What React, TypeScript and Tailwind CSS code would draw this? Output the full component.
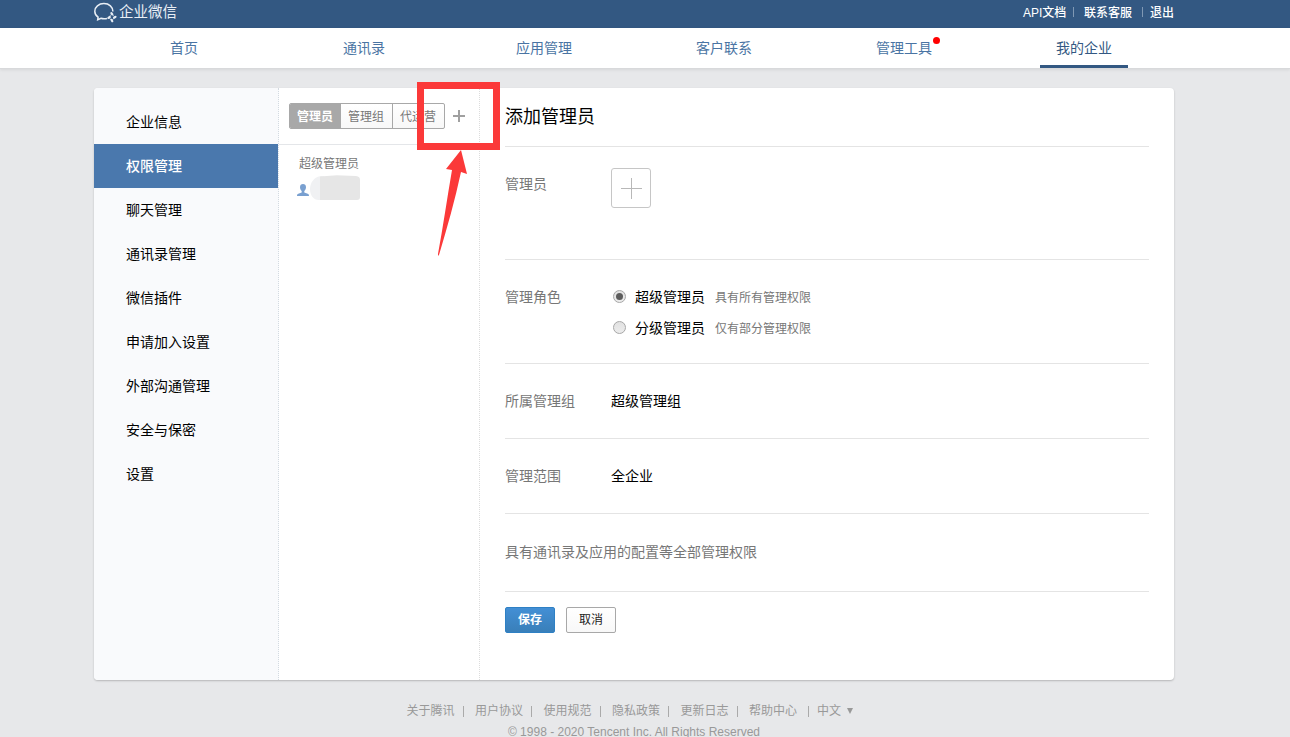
import React from "react";

const navItems = ["首页", "通讯录", "应用管理", "客户联系", "管理工具", "我的企业"];
const menuItems = [
  "企业信息",
  "权限管理",
  "聊天管理",
  "通讯录管理",
  "微信插件",
  "申请加入设置",
  "外部沟通管理",
  "安全与保密",
  "设置",
];
const footerLinks = ["关于腾讯", "用户协议", "使用规范", "隐私政策", "更新日志", "帮助中心"];

function Logo() {
  return (
    <div className="flex h-[24px] items-center text-white">
      <svg width="24" height="23" viewBox="0 0 24 23" fill="none" stroke="#e8eef5" strokeWidth="1.5" className="mt-[1px]">
        <path d="M18.900 10.500C18.900 6 15.200 2.600 9.900 2.600C4.700 2.600 0.800 6 0.800 10.200C0.800 12.700 2.100 14.800 4.100 16.200L3.700 18.800L7 17.300C8.900 17.900 11 17.900 13 17.400" />
        <path d="M17.400 12.200L18.300 13.400M21.500 15.900L20.100 16.700M18.300 20.200L17.500 18.800M14.400 16.900L15.800 16" strokeWidth="2.200" strokeLinecap="round" />
        <path d="M18 13L20.800 16M20.500 16.500L18.200 19.200M17.800 19.300L15 16.900M15.200 16L17.400 13.200" strokeWidth="0.600" />
      </svg>
      <span className="ml-[1px] mt-[-2px] text-[14.500px] leading-[22px] text-[#e9eff6]">企业微信</span>
    </div>
  );
}

function TopBar() {
  return (
    <header className="h-[28px] bg-[#335882] pl-[94px]">
      <div className="flex w-[1080px] items-start justify-between">
        <Logo />
        <div className="flex h-[24px] items-center text-[12px] font-medium text-white">
          <span className="w-[45px] whitespace-nowrap">
            <span className="font-['Liberation_Sans',sans-serif] font-normal">API</span>文档
          </span>
          <span className="ml-[5px] mr-[10px] h-[10px] w-px bg-[#7f98b4]" />
          <span>联系客服</span>
          <span className="ml-[10px] mr-[7px] h-[10px] w-px bg-[#7f98b4]" />
          <span>退出</span>
        </div>
      </div>
    </header>
  );
}

function Nav() {
  return (
    <nav className="h-[41px] border-b border-[#d8d9db] bg-white pl-[94px] shadow-[0_1px_3px_rgba(0,0,0,0.08)]">
      <ul className="flex w-[1080px]">
        {navItems.map((item, i) => (
          <li key={item} className="flex w-[180px] justify-center">
            <span
              className={
                i === 5
                  ? "h-[40px] w-[88px] border-b-[3px] border-[#335882] text-center text-[14px] leading-[39px] text-[#335882]"
                  : "relative h-[40px] text-[14px] leading-[39px] text-[#4a74a3]"
              }
            >
              {item}
              {i === 4 && <i className="absolute right-[-8px] top-[9px] size-[7px] rounded-full bg-[#ff0000]" />}
            </span>
          </li>
        ))}
      </ul>
    </nav>
  );
}

function SideMenu() {
  return (
    <ul className="w-[185px] rounded-l-[4px] border-r border-dotted border-[#d3dae1] bg-[#f9fafc] pt-[12px]">
      {menuItems.map((item, i) => (
        <li
          key={item}
          className={
            i === 1
              ? "h-[44px] bg-[#4a78ad] pl-[32px] text-[14px] font-medium leading-[43px] text-white"
              : "h-[44px] pl-[32px] text-[14px] leading-[43px] text-black"
          }
        >
          {item}
        </li>
      ))}
    </ul>
  );
}

function GroupColumn() {
  return (
    <section className="w-[201px] border-r border-dotted border-[#dcdcdc]">
      <div className="flex h-[57px] items-start border-b border-[#e4e6e9] pl-[10px] pt-[15px]">
        <div className="flex h-[26px] w-[156px] overflow-hidden rounded-[2px] border border-[#a8a8a8] bg-linear-to-b from-white to-[#f8f8f8] text-[12px] leading-[23px] text-[#777]">
          <span className="w-[51px] bg-[#a8a8a8] pl-[7px] font-bold text-white">管理员</span>
          <span className="w-[51px] pl-[7px]">管理组</span>
          <span className="w-[52px] border-l border-[#a8a8a8] pl-[7px]">代运营</span>
        </div>
        <svg width="12" height="12" className="ml-[8px] mt-[7px]" stroke="#a0a0a0" strokeWidth="2">
          <path d="M6 0V12M0 6H12" />
        </svg>
      </div>
      <div className="pl-[20px] pt-[9px]">
        <p className="text-[12px] leading-[18px] text-[#777]">超级管理员</p>
        <div className="ml-[-2px] mt-[3px] flex items-start">
          <svg width="12" height="12" viewBox="0 0 12 12" fill="#79a0d0" className="mt-[9px]">
            <path d="M6 0C4.200 0 3 1.200 3 3.200C3 4.700 3.600 6.100 4.700 7V8.400L1.300 9.800C.400 10.200 0 10.900 0 12H12C12 10.900 11.600 10.200 10.700 9.800L7.300 8.400V7C8.400 6.100 9 4.700 9 3.200C9 1.200 7.800 0 6 0Z" />
          </svg>
          <svg width="50" height="25" className="ml-[1px]">
            <path d="M10 1.200C4 2 0 8 0 14C0 20 3 25 9 25H14V1Z" fill="#f0f1f3" />
            <path d="M10 1.500L27 0.300L46 1C49 1.200 50 3 50 5V22Q50 25 47 25H10Z" fill="#e6e6e6" />
          </svg>
        </div>
      </div>
    </section>
  );
}

function Radio({ checked, label, hint }: { checked?: boolean; label: string; hint: string }) {
  return (
    <div className="flex h-[31px] items-center pl-[2px]">
      <span className="flex size-[13px] items-center justify-center rounded-full border border-[#a7a7a7] bg-linear-to-b from-[#e1e1e1] to-[#ececec]">
        {checked && <i className="size-[7px] rounded-full bg-[#5c5c5c]" />}
      </span>
      <span className="ml-[9px] text-[14px] text-black">{label}</span>
      <span className="ml-[10px] pt-[1px] text-[12px] text-[#777]">{hint}</span>
    </div>
  );
}

function Field({ label, className, children }: { label: string; className: string; children: React.ReactNode }) {
  return (
    <div className={className}>
      <span className="w-[106px] text-[14px] leading-[20px] text-[#777]">{label}</span>
      {children}
    </div>
  );
}

function AdminForm() {
  return (
    <main className="flex-1 px-[25px]">
      <h1 className="h-[59px] border-b border-[#e4e4e4] text-[18px] leading-[54px] text-black">添加管理员</h1>
      <Field label="管理员" className="flex h-[113px] items-start border-b border-[#e4e4e4] pt-[26px]">
        <button className="-mt-[5px] flex size-[40px] items-center justify-center rounded-[3px] border border-[#c6c6c6]">
          <svg width="22" height="22" stroke="#b8b8b8" strokeWidth="1">
            <path d="M11.500 1V22M1 11.500H22" />
          </svg>
        </button>
      </Field>
      <Field label="管理角色" className="flex h-[104px] items-start border-b border-[#e4e4e4] pt-[26px]">
        <div className="-mt-[5px]">
          <Radio checked label="超级管理员" hint="具有所有管理权限" />
          <Radio label="分级管理员" hint="仅有部分管理权限" />
        </div>
      </Field>
      <Field label="所属管理组" className="flex h-[75px] items-start border-b border-[#e4e4e4] pt-[26px]">
        <span className="text-[14px] leading-[20px] text-black">超级管理组</span>
      </Field>
      <Field label="管理范围" className="flex h-[75px] items-start border-b border-[#e4e4e4] pt-[26px]">
        <span className="text-[14px] leading-[20px] text-black">全企业</span>
      </Field>
      <p className="h-[78px] border-b border-[#e4e4e4] pt-[27px] text-[14px] leading-[20px] text-[#777]">
        具有通讯录及应用的配置等全部管理权限
      </p>
      <div className="flex gap-[11px] pt-[15px]">
        <button className="flex h-[26px] w-[50px] justify-center rounded-[2px] border border-[#2e80c4] bg-linear-to-b from-[#438fd5] to-[#397fb9] text-[12px] font-bold leading-[22px] text-white">
          保存
        </button>
        <button className="flex h-[26px] w-[50px] justify-center rounded-[2px] border border-[#a8a8a8] bg-linear-to-b from-white to-[#f8f8f8] text-[12px] leading-[22px] text-[#222]">
          取消
        </button>
      </div>
    </main>
  );
}

function Footer() {
  return (
    <footer className="ml-[94px] w-[1080px] pt-[21px] text-[12px] text-[#999]">
      <div className="flex h-[18px] items-center pl-[312.500px] leading-[18px]">
        {footerLinks.map((link, i) => (
          <React.Fragment key={link}>
            <span>{link}</span>
            <span className={i === 5 ? "ml-[11px] mr-[8px] mt-[2px] h-[11px] w-px bg-[#aaa]" : "ml-[8px] mr-[11.500px] mt-[2px] h-[11px] w-px bg-[#aaa]"} />
          </React.Fragment>
        ))}
        <span>中文</span>
        <svg width="6" height="6" viewBox="0 0 6 6" className="ml-[6px] mt-[1px]" fill="#999">
          <path d="M0 0H6L3 6Z" />
        </svg>
      </div>
      <p className="mt-[5px] text-center font-['Liberation_Sans',Arial,sans-serif] text-[12px] leading-[16px]">
        © 1998 - 2020 Tencent Inc. All Rights Reserved
      </p>
    </footer>
  );
}

export default function App() {
  return (
    <div className="relative h-[737px] w-[1290px] overflow-hidden bg-[#e7e8ea] font-['Noto_Sans_CJK_SC',sans-serif]">
      <TopBar />
      <Nav />
      <div className="ml-[94px] mt-[19px] flex h-[592px] w-[1080px] rounded-[4px] bg-white shadow-[0_1px_2px_rgba(0,0,0,0.22)]">
        <SideMenu />
        <GroupColumn />
        <AdminForm />
      </div>
      <Footer />
      <svg className="absolute left-[410px] top-[75px]" width="100" height="190">
        <rect x="10.500" y="10.500" width="76" height="61" fill="none" stroke="#fb3939" strokeWidth="7" />
        <path d="M51 75L57 99L51 97C45 125 37 153 29 180Q28 182 28 179C33 152 37 124 42 95L36 94Z" fill="#fb3939" />
      </svg>
    </div>
  );
}
